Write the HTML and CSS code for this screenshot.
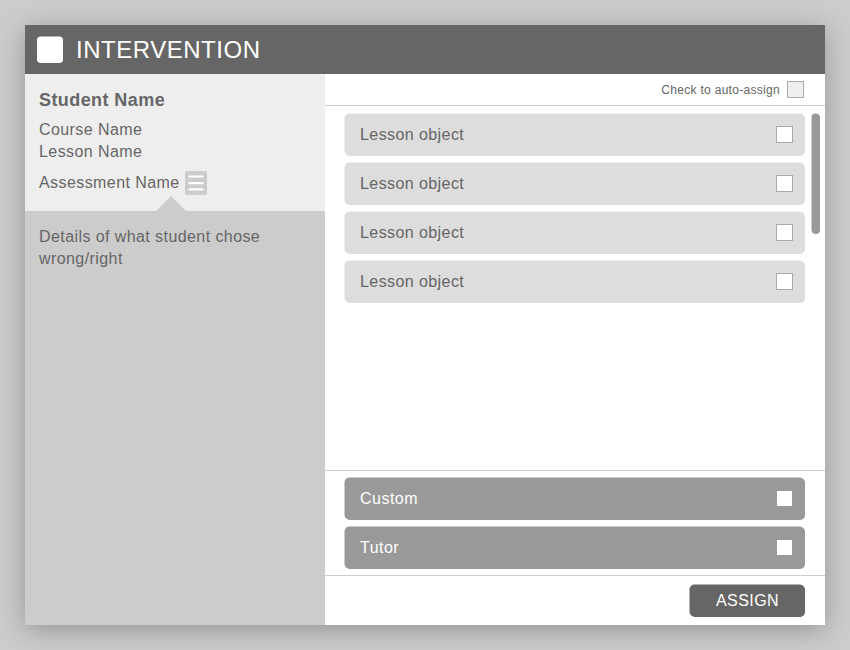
FILE: index.html
```html
<!DOCTYPE html>
<html lang="en">
<head>
<meta charset="utf-8">
<title>Intervention</title>
<link rel="stylesheet" href="styles.css">
</head>
<body>
<main class="window">
  <header class="titlebar">
    <span class="logo"></span>
    <h1>INTERVENTION</h1>
  </header>
  <div class="columns">
    <aside class="sidebar">
      <section class="summary">
        <h2>Student Name</h2>
        <p>Course Name</p>
        <p>Lesson Name</p>
        <div class="assessment">
          <span>Assessment Name</span>
          <svg class="list-icon" width="22" height="24" viewBox="0 0 22 24">
            <rect width="22" height="24" rx="1.5" fill="#ccc"/>
            <path d="M4.3 5.5H17.7M4.3 12.2H17.7M4.3 18.4H17.7" stroke="#fff" stroke-width="2.2" stroke-linecap="round"/>
          </svg>
        </div>
      </section>
      <section class="details">Details of what student chose wrong/right</section>
    </aside>
    <section class="content">
      <label class="auto">Check to auto-assign <span class="box tinted"></span></label>
      <div class="lessons">
        <div class="rows">
          <div class="row">Lesson object <span class="box"></span></div>
          <div class="row">Lesson object <span class="box"></span></div>
          <div class="row">Lesson object <span class="box"></span></div>
          <div class="row">Lesson object <span class="box"></span></div>
        </div>
        <div class="scrollbar"></div>
      </div>
      <div class="extras rows">
        <div class="row dark">Custom <span class="box plain"></span></div>
        <div class="row dark">Tutor <span class="box plain"></span></div>
      </div>
      <footer class="actions"><button class="assign">ASSIGN</button></footer>
    </section>
  </div>
</main>
</body>
</html>
```
FILE: styles.css
```css
* { box-sizing: border-box; }
body {
  margin: 0;
  height: 650px;
  padding: 25px;
  background: #ccc;
  color: #666;
  font: 16px/22px "Liberation Sans", Arial, sans-serif;
  letter-spacing: 0.42px;
}
h1, h2, p { margin: 0; }
.window {
  display: flex;
  flex-direction: column;
  width: 800px;
  height: 600px;
  background: #fff;
  box-shadow: 0 5px 25px rgba(0, 0, 0, 0.27);
}
.titlebar {
  display: flex;
  align-items: center;
  gap: 13px;
  height: 49px;
  padding-left: 12px;
  background: #666;
  color: #fff;
}
.logo {
  width: 26px;
  height: 26px;
  border-radius: 4px;
  background: #fff;
  box-shadow: 0 -0.5px 0 #fff;
}
h1 {
  font-size: 24px;
  font-weight: 400;
  line-height: 30px;
  letter-spacing: 0.52px;
}
.columns { display: flex; flex: 1; }
.sidebar {
  display: flex;
  flex-direction: column;
  width: 300px;
  background: #ccc;
}
.summary {
  height: 137px;
  padding: 15px 14px 0;
  background: #eee;
}
h2 {
  margin-bottom: 8px;
  font-size: 18px;
  line-height: 22px;
}
.assessment {
  display: flex;
  align-items: center;
  gap: 5px;
  height: 24px;
  margin-top: 8px;
}
.list-icon { display: block; }
.details {
  position: relative;
  padding: 15px 14px;
}
.details::before {
  content: "";
  position: absolute;
  left: 131px;
  top: -15px;
  border: 15px solid transparent;
  border-top: 0;
  border-bottom-color: #ccc;
}
.content {
  display: flex;
  flex-direction: column;
  flex: 1;
}
.auto {
  display: flex;
  align-items: center;
  justify-content: flex-end;
  gap: 7px;
  height: 32px;
  padding-right: 21px;
  border-bottom: 1px solid #ccc;
  font-size: 12px;
  letter-spacing: 0.3px;
}
.box {
  width: 17px;
  height: 17px;
  border: 1px solid #aaa;
  background: #fff;
}
.tinted { background: #eee; }
.row .box { margin-bottom: 1px; }
.plain {
  width: 15px;
  height: 15px;
  margin-right: 1px;
  border: 0;
}
.lessons {
  display: flex;
  gap: 7px;
  height: 364px;
  padding: 8px 0 0 20px;
}
.rows {
  display: flex;
  flex-direction: column;
  gap: 7px;
}
.row {
  display: flex;
  align-items: center;
  justify-content: space-between;
  width: 460px;
  height: 42px;
  padding: 0 12px 0 15px;
  border-radius: 5px;
  background: #ddd;
  box-shadow: -0.5px -0.5px 0 #ddd;
}
.dark {
  background: #999;
  box-shadow: -0.5px -0.5px 0 #999;
  color: #fff;
  letter-spacing: 0.48px;
}
.scrollbar {
  width: 7.5px;
  height: 120px;
  border-radius: 4px;
  background: #999;
  box-shadow: -0.5px -0.5px 0 #999;
}
.extras {
  height: 106px;
  padding: 7px 0 0 20px;
  border-top: 1px solid #ccc;
  border-bottom: 1px solid #ccc;
}
.actions {
  display: flex;
  justify-content: flex-end;
  padding: 9px 20px 0;
}
.assign {
  width: 115px;
  height: 32px;
  padding: 0;
  border: 0;
  border-radius: 5px;
  background: #666;
  box-shadow: -0.5px -0.5px 0 #666;
  color: #fff;
  font: inherit;
  letter-spacing: 0.45px;
}
```
